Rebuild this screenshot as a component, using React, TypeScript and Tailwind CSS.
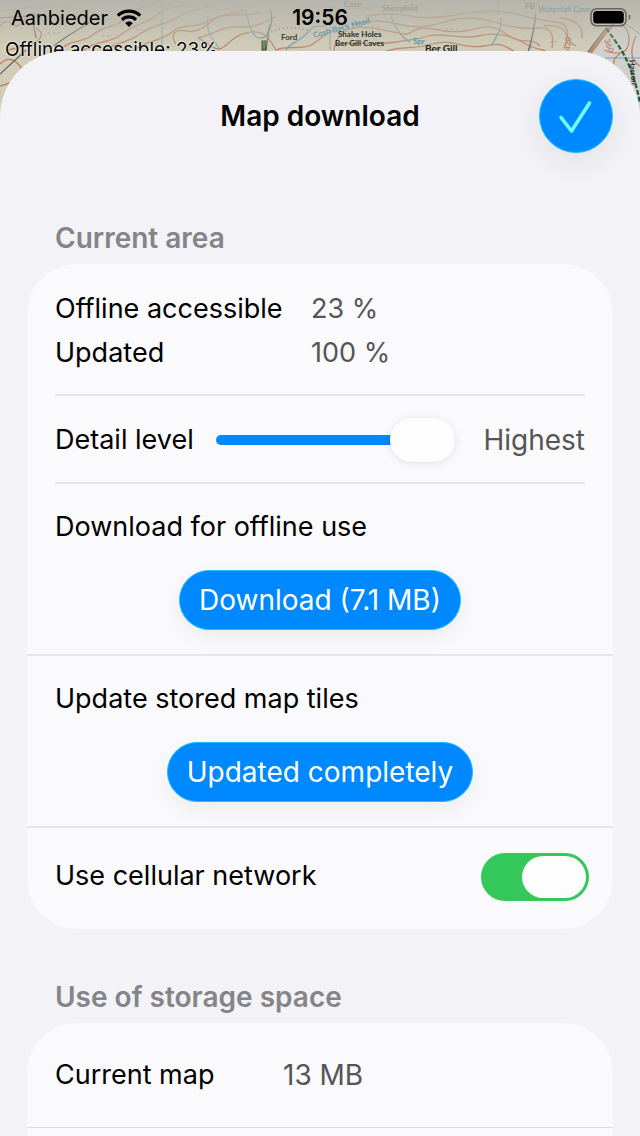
import { useState } from "react";
import type { ReactNode } from "react";

function MapBackdrop() {
  return (
    <svg
      className="absolute inset-x-0 top-0 h-[140px] w-full"
      viewBox="0 0 640 140"
      preserveAspectRatio="xMidYMin slice"
      aria-hidden="true"
    >
      <defs>
        <linearGradient id="haze" x1="0" y1="0" x2="0" y2="1">
          <stop offset="0" stopColor="#b4b3ac" stopOpacity="0.95" />
          <stop offset="0.5" stopColor="#b9b7ac" stopOpacity="0.6" />
          <stop offset="1" stopColor="#c8c5b4" stopOpacity="0" />
        </linearGradient>
      </defs>
      <rect width="640" height="140" fill="#d0ccb8" />
      <path d="M586 58 L612 22 L640 20 V140 H586Z" fill="#d2d0cd" />
      <g fill="none" stroke="#bd8468" strokeWidth="1.3">
        <path d="M0 26 Q6 18 12 24 T26 18 T40 24 M36 28 Q44 32 40 38 T26 46 L8 50" />
        <path d="M60 50 C72 38 82 44 94 34 S118 28 124 18 S150 8 160 0" />
        <path d="M84 50 C96 40 110 44 122 34 S146 24 158 14 S178 10 190 2" />
        <path d="M104 51 C116 42 126 44 140 34 S168 24 180 16 S204 10 214 4" />
        <path d="M132 51 C146 40 160 42 172 32 S190 30 206 22 S226 16 244 10" />
        <path d="M176 44 C170 36 174 28 186 31 S208 24 216 18 S240 18 262 12" />
        <path d="M198 38 C214 34 222 26 240 27 S262 22 276 17" />
        <path d="M198 38 C208 42 214 52 222 48 S232 36 246 33 S266 32 276 50" />
        <path d="M276 50 C288 44 304 52 316 42 S328 34 334 30 M334 52 C334 42 338 34 350 29 S386 31 404 34 C410 36 412 28 424 28 S446 34 464 31 S490 22 506 34 S530 36 540 46" />
        <path d="M334 46 C350 40 372 46 396 42 S416 40 428 36 S462 40 478 36 S508 34 522 42 S538 48 546 51" />
        <path d="M384 52 C398 46 412 50 432 44 S466 50 484 46 S504 46 514 51" />
        <path d="M352 24 Q376 18 398 24 T444 22 T494 22 T538 28 T552 48" />
        <path d="M366 16 Q390 12 410 16 T462 14 T516 14 T556 22 T564 48" />
        <path d="M544 26 Q562 24 566 34 T576 46 M560 18 Q584 20 582 38" />
        <path d="M588 56 L606 32 L614 24" strokeWidth="3" />
        <path d="M622 24 Q632 34 628 46 T604 50 M620 54 Q610 60 616 68 M636 36 Q626 58 640 66" />
        <path d="M0 64 Q10 54 20 66 T0 86" />
      </g>
      <g fill="none" stroke="#c2a696" strokeWidth="0.8">
        <path d="M120 14 Q160 0 200 8 M210 12 Q260 0 310 6 T420 4 T540 6 M340 10 Q380 4 430 10 T550 12 M0 12 Q40 2 90 10" />
      </g>
      <g fill="none" stroke="#6f9fae" strokeWidth="1.4">
        <path d="M246 10 C248 22 252 38 260 38 S268 32 270 24 M286 50 C290 42 298 44 308 32 S320 32 330 22 M391 16 C396 30 402 38 410 42 M501 18 C502 30 496 36 492 45" />
        <path d="M162 0 V50 M330 0 V50 M208 16 Q206 30 212 38 T220 50 M498 0 V14 M536 10 L530 50 M605 58 H640 M626 24 L640 34" strokeWidth="0.9" />
      </g>
      <g fill="none" stroke="#62645c" strokeWidth="1.2">
        <path d="M54 46 C66 36 78 30 90 22 M32 18 L36 38 M0 74 L26 50 M0 18 L28 16" />
        <path d="M270 10 Q274 20 269 30 L266 50" />
        <path d="M536 14 Q534 32 528 52" />
        <path d="M588 52 L606 28" />
      </g>
      <path d="M268 34 Q282 24 308 30" fill="none" stroke="#77776c" strokeWidth="2" strokeDasharray="1 3" />
      <path d="M606 28 C616 42 624 52 630 68 S638 92 640 104" fill="none" stroke="#17613a" strokeWidth="2.2" strokeDasharray="5 2" />
      <rect x="262" y="41" width="4" height="9" fill="#66864a" stroke="#38482e" />
      <g fill="none" stroke="#8d9d76" strokeWidth="1.2" strokeDasharray="2 3">
        <path d="M48 33 H60 M102 36 H112 M136 30 H148 M196 45 H206 M372 27 H380 M446 29 H458 M484 24 H494 M550 42 H558 M446 46 H452" />
      </g>
      <rect width="640" height="51" fill="url(#haze)" />
      <g className="font-['Lato',sans-serif] font-bold" fontSize="8">
        <text x="281" y="40" fill="#3b3b36">Ford</text>
        <text x="338" y="37" fill="#2d2d2a">Shake Holes</text>
        <text x="335" y="46" fill="#2d2d2a">Ber Gill Caves</text>
        <text x="413" y="44" fill="#4c98b4">Spr</text>
        <text x="425" y="52" fill="#222220" fontSize="10">Ber Gill</text>
        <text transform="translate(314 38) rotate(-15)" fill="#5f9eb3">Cosh Beck Head</text>
        <text x="344" y="7" fill="#a1a098">Cave</text>
        <text x="382" y="11" fill="#a1a098">Sheepfold</text>
        <text x="525" y="9" fill="#a39e96">FB</text>
        <text x="538" y="12" fill="#8fa5aa">Waterfall Cave</text>
        <text transform="translate(570 51) rotate(-85)" fill="#b48a76">420</text>
        <text transform="translate(604 40) rotate(70)" fill="#b48a76">360</text>
        <text transform="translate(629 60) rotate(84)" fill="#33332f">Harron</text>
      </g>
    </svg>
  );
}

function WifiIcon() {
  return (
    <svg className="h-5 w-[26px]" viewBox="0 0 26 20" fill="none" aria-hidden="true">
      <path d="M1.8 7.6C8 1.7 18 1.7 24.2 7.6" stroke="#000" strokeWidth="3.2" />
      <path d="M6 11.8C10 8 16 8 20 11.8" stroke="#000" strokeWidth="3.2" />
      <path d="M9.2 15.1C11.4 13 14.6 13 16.8 15.1L13 19Z" fill="#000" />
    </svg>
  );
}

function BatteryIcon() {
  return (
    <svg className="h-5 w-[42px]" viewBox="0 0 42 20" fill="none" aria-hidden="true">
      <rect x="1" y="0.8" width="35" height="17" rx="5.5" stroke="#686760" strokeWidth="1.6" />
      <rect x="3.2" y="3" width="30.6" height="12.6" rx="3.5" fill="#000" />
      <path d="M39.5 7v4.5" stroke="#686760" strokeWidth="1.6" />
    </svg>
  );
}

function Section({ title, children, className }: { title: string; children: ReactNode; className: string }) {
  return (
    <section className={className}>
      <h2 className="mb-2 px-7 text-[28px] leading-9 font-semibold text-[#848489]">{title}</h2>
      {children}
    </section>
  );
}

function PillButton({ children }: { children: ReactNode }) {
  return (
    <button
      type="button"
      className="mx-auto block h-15 rounded-full border border-[#16c0ff] bg-[#0088ff] px-[19px] text-[28px] text-white shadow-[0_8px_24px_rgba(0,0,0,0.06)]"
    >
      {children}
    </button>
  );
}

export default function App() {
  const [detail, setDetail] = useState(100);
  const [cellular, setCellular] = useState(true);

  return (
    <div className="relative flex min-h-screen flex-col overflow-hidden bg-[#cfcbb8] font-['Inter','Liberation_Sans',sans-serif] text-[27px] text-black">
      <MapBackdrop />
      <header className="relative h-[51px]">
        <div className="grid h-9 grid-cols-[1fr_auto_1fr] items-center px-2 text-[20px] leading-9">
          <div className="flex items-center gap-2 pl-[3px]">
            <span>Aanbieder</span>
            <WifiIcon />
          </div>
          <time className="text-[21px] font-semibold">19:56</time>
          <div className="flex justify-end">
            <BatteryIcon />
          </div>
        </div>
        <p className="pl-[5px] text-[19px] leading-7 [text-shadow:0_0_2px_#fff,0_0_2px_#fff]">
          Offline accessible: 23%
        </p>
      </header>

      <main className="relative flex flex-1 flex-col rounded-t-[66px] bg-[#f3f3f7] px-[27px] pt-7">
        <div className="grid grid-cols-[74px_1fr_74px] items-center">
          <h1 className="col-start-2 text-center text-[28px] font-semibold">Map download</h1>
          <button
            type="button"
            aria-label="Done"
            className="size-[74px] rounded-full border border-[#16c0ff] bg-[#0088ff] shadow-[0_8px_32px_rgba(0,0,0,0.08)]"
          >
            <svg className="size-full" viewBox="1 1 72 72" fill="none" aria-hidden="true">
              <path
                d="M22 38.5L32.5 52L50.5 24"
                stroke="#70fbff"
                strokeWidth="3.6"
                strokeLinecap="round"
                strokeLinejoin="round"
              />
            </svg>
          </button>
        </div>

        <Section title="Current area" className="mt-[67px]">
          <div className="rounded-[50px] bg-[#fafafc]">
            <div className="px-7">
              <dl className="grid grid-cols-[256px_1fr] border-b-2 border-[#e6e6e8] pt-[23px] pb-[19px] leading-[44px]">
                <dt>Offline accessible</dt>
                <dd className="text-[#555555]">23 %</dd>
                <dt>Updated</dt>
                <dd className="text-[#555555]">100 %</dd>
              </dl>
              <div className="flex h-22 items-center border-b-2 border-[#e6e6e8] pt-0.5">
                <label htmlFor="detail">Detail level</label>
                <input
                  id="detail"
                  type="range"
                  min={0}
                  max={100}
                  value={detail}
                  onChange={(e) => setDetail(Number(e.target.value))}
                  style={{
                    backgroundImage: `linear-gradient(to right, #0088ff ${detail}%, #e3e3e6 ${detail}%)`,
                  }}
                  className="mr-7 ml-[22px] h-[10px] min-w-0 flex-1 appearance-none rounded-full [&::-webkit-slider-thumb]:h-11 [&::-webkit-slider-thumb]:w-[65px] [&::-webkit-slider-thumb]:appearance-none [&::-webkit-slider-thumb]:rounded-full [&::-webkit-slider-thumb]:bg-[#fdfdfe] [&::-webkit-slider-thumb]:shadow-[0_1px_8px_rgba(0,0,0,0.1)]"
                />
                <output htmlFor="detail" className="text-[28px] text-[#555555]">Highest</output>
              </div>
            </div>
            <div className="border-b-2 border-[#e6e6e8] pt-[21px] pb-6">
              <h3 className="mb-[21px] px-7 leading-[44px]">Download for offline use</h3>
              <PillButton>Download (7.1 MB)</PillButton>
            </div>
            <div className="border-b-2 border-[#e6e6e8] pt-[21px] pb-6">
              <h3 className="mb-[21px] px-7 leading-[44px]">Update stored map tiles</h3>
              <PillButton>Updated completely</PillButton>
            </div>
            <div className="flex h-[101px] items-center justify-between pr-6 pb-1 pl-7">
              <label htmlFor="cellular">Use cellular network</label>
              <input
                id="cellular"
                type="checkbox"
                role="switch"
                checked={cellular}
                onChange={(e) => setCellular(e.target.checked)}
                className="flex h-12 w-27 appearance-none items-center rounded-full bg-[#d8d8dc] px-[3px] before:h-[42px] before:w-16 before:rounded-full before:bg-[#fdfdfe] checked:justify-end checked:bg-[#34c759]"
              />
            </div>
          </div>
        </Section>

        <Section title="Use of storage space" className="mt-[50px] flex flex-1 flex-col">
          <dl className="flex-1 rounded-t-[50px] bg-[#fafafc]">
            <div className="flex h-[105px] items-center border-b border-[#dcdcde] px-7">
              <dt className="w-[228px]">Current map</dt>
              <dd className="text-[28px] text-[#555555]">13 MB</dd>
            </div>
          </dl>
        </Section>
      </main>
    </div>
  );
}
